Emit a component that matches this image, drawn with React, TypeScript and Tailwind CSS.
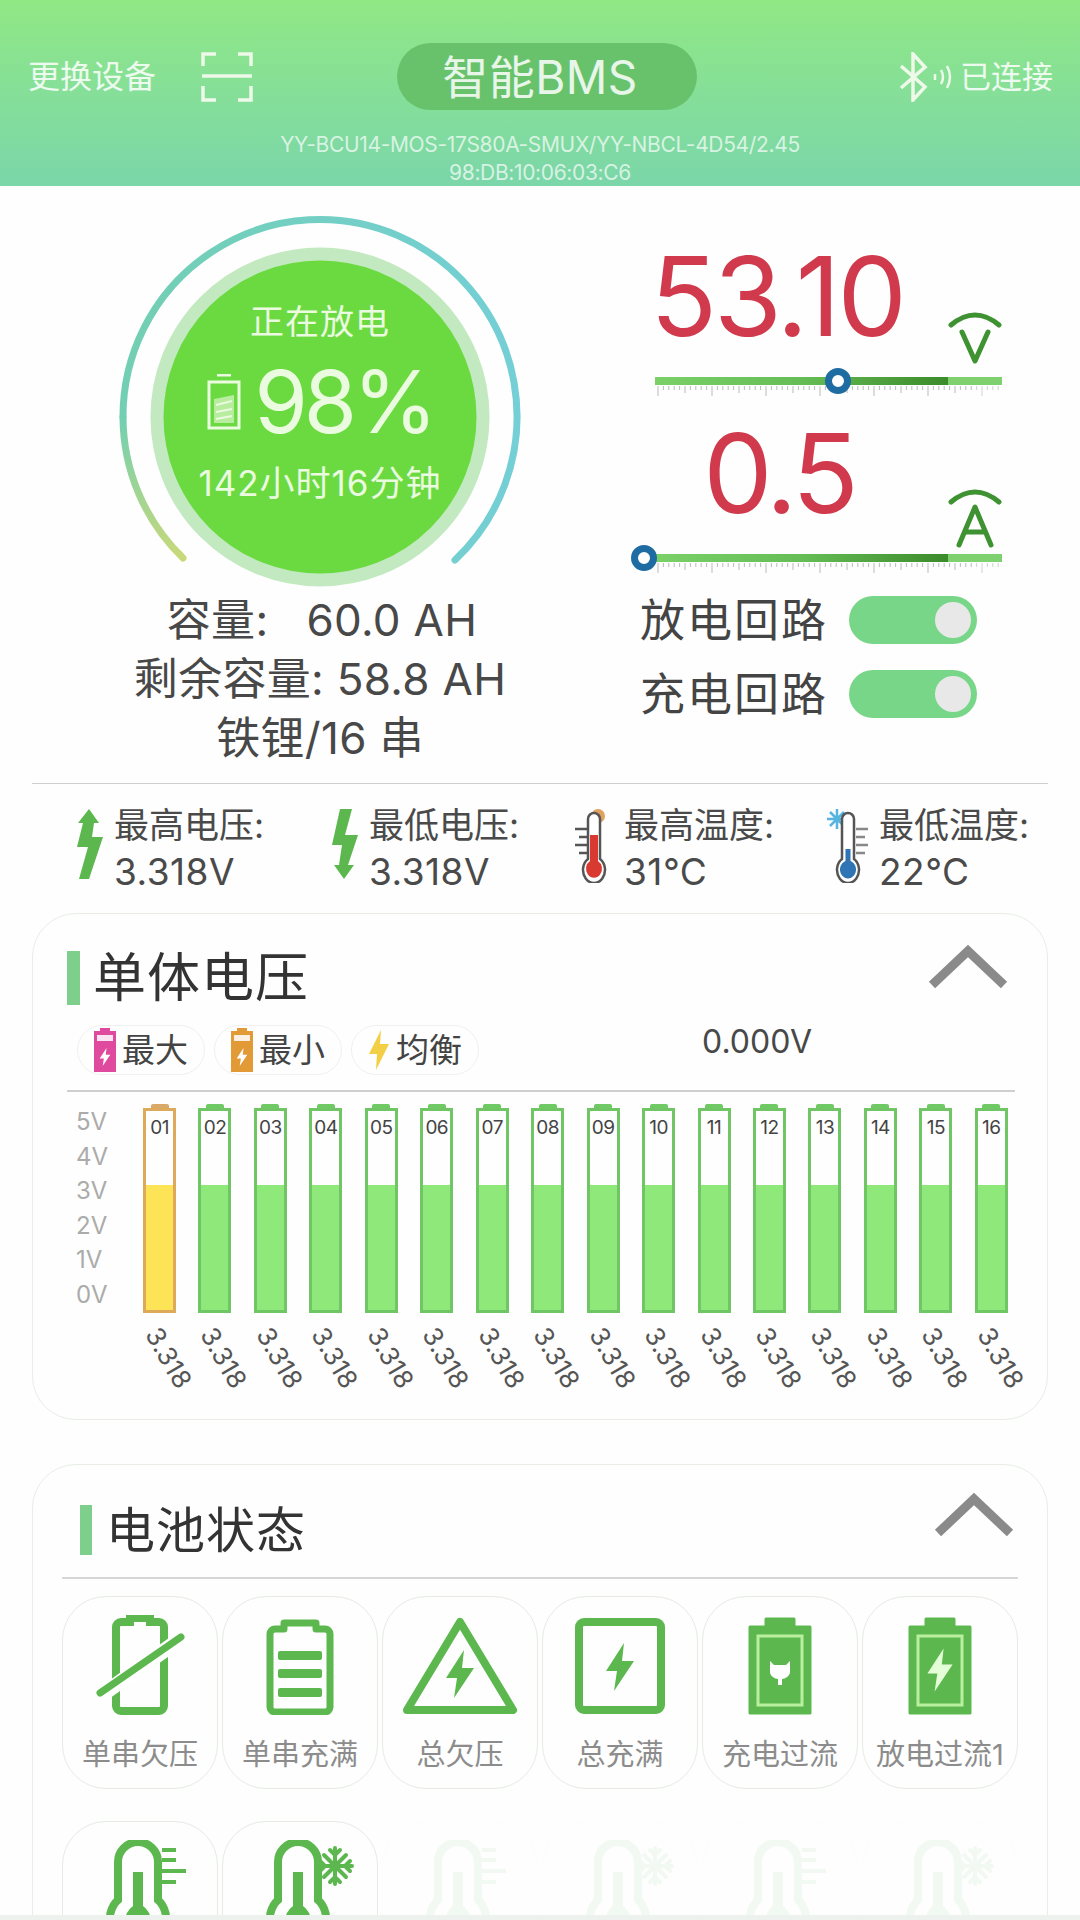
const bars = ["01","02","03","04","05","06","07","08","09","10","11","12","13","14","15","16"];
const axis = ["5V","4V","3V","2V","1V","0V"];
const G = "#5cb84e";

const Bolt = ({ x, y, s = 1, fill = G }: { x: number; y: number; s?: number; fill?: string }) => (
  <path transform={`translate(${x} ${y}) scale(${s})`} d="M4-24-14 4H-3L-6 24 14-6H2Z" fill={fill} />
);

const Ticks = () => (
  <svg width="347" height="12" viewBox="0 0 347 12" className="block">
    {Array.from({ length: 64 }).map((_, i) => (
      <line key={i} x1={3 + i * 5.4} x2={3 + i * 5.4} y1="1" y2={i % 10 === 0 ? 11 : i % 5 === 0 ? 8 : 5} stroke="#9aa39a" strokeWidth="1" opacity={i > 58 ? 0.45 : 0.7} />
    ))}
  </svg>
);

const Slider = ({ pos }: { pos: number }) => (
  <div className="relative ml-[15px] h-[44px] w-[347px] pt-[18px]">
    <div className="flex h-[8px]">
      <div className="w-[293px] bg-gradient-to-r from-[#7bd068] via-[#66bd55] to-[#3b8a2b]" />
      <div className="flex-1 bg-[#7fd06f]" />
    </div>
    <Ticks />
    <div className="absolute top-[9px] h-[26px] w-[26px] rounded-full border-[7px] border-[#1f6ca3] bg-white" style={{ left: pos - 13 }} />
  </div>
);

const UnitIcon = ({ label }: { label: string }) => (
  <svg width="60" height="64" viewBox="0 0 60 64" className="mb-[-13px]">
    <path d="M5 17Q29-3 53 17" fill="none" stroke="#3f9232" strokeWidth="5" strokeLinecap="round" />
    {label === "V" ? (
      <path d="M16 24 29 53 42 24" fill="none" stroke="#3f9232" strokeWidth="5" strokeLinecap="round" strokeLinejoin="round" />
    ) : (
      <path d="M13 60 29 22 45 60M19 47H39" fill="none" stroke="#3f9232" strokeWidth="5" strokeLinecap="round" strokeLinejoin="round" />
    )}
  </svg>
);

const Toggle = ({ label }: { label: string }) => (
  <div className="flex h-[74px] items-center">
    <span className="w-[209px] text-[45px] leading-none tracking-[2px] text-[#444]">{label}</span>
    <div className="flex h-[48px] w-[128px] items-center justify-end rounded-full bg-[#78d688] pr-[6px]">
      <div className="h-[36px] w-[36px] rounded-full bg-[#e8e8e8]" />
    </div>
  </div>
);

const Stat = ({ icon, label, value }: { icon: React.ReactNode; label: string; value: string }) => (
  <div className="flex w-[255px] shrink-0">
    <div className="flex w-[48px] justify-center pt-[3px]">{icon}</div>
    <div className="flex flex-col gap-[9px] leading-[38px] text-[#4a4a4a]">
      <span className="text-[35px]">{label}</span>
      <span className="text-[37px] tracking-[0.5px]">{value}</span>
    </div>
  </div>
);

const Thermo = ({ hot }: { hot: boolean }) => {
  const c = hot ? "#d83a32" : "#2f74b5";
  return (
    <svg width="56" height="74" viewBox="0 0 56 74" className={hot ? "ml-[-20px] shrink-0" : "ml-[-15px] shrink-0"}>
      {hot ? (
        <>
          <circle cx="36" cy="7" r="7" fill="#e0a060" />
          <path d="M13 20H26M17 28H26M13 36H26M17 44H26" stroke="#555" strokeWidth="2.500" />
        </>
      ) : (
        <>
          <path d="M17 0V20M7 10H27M10 3 24 17M24 3 10 17" stroke="#55b5e0" strokeWidth="2.500" />
          <path d="M36 20H48M36 28H45M36 36H48M36 44H45" stroke="#888" strokeWidth="2.500" />
        </>
      )}
      <path d={hot ? "M26 10V50A11 13 0 1 0 38 50V10A6 6 0 0 0 26 10Z" : "M22 10V50A11 13 0 1 0 34 50V10A6 6 0 0 0 22 10Z"} fill="#fff" stroke="#555" strokeWidth="2.500" />
      <path d={hot ? "M28 26H36V52A8 9 0 1 1 28 52Z" : "M25.500 40H30.500V52A8 9 0 1 1 25.500 52Z"} fill={c} />
    </svg>
  );
};

const LegendBattery = ({ color }: { color: string }) => (
  <svg width="22" height="44" viewBox="0 0 22 44">
    <path d="M6 0H16V3H22V44H0V3H6Z" fill={color} />
    <rect x="3" y="7" width="16" height="6" fill="#fff" opacity=".85" />
    <Bolt x={11} y={29} s={0.38} fill="#ffffff" />
  </svg>
);

const Pill = ({ icon, label }: { icon: React.ReactNode; label: string }) => (
  <div className="flex h-[50px] w-[128px] items-center justify-center gap-[6px] rounded-full border border-[#f0f0f0] text-[33px] leading-none text-[#444]">
    {icon}
    <span>{label}</span>
  </div>
);

const Chevron = () => (
  <svg width="84" height="48" viewBox="0 0 84 48">
    <path d="M6 42 42 8 78 42" fill="none" stroke="#8a8a8a" strokeWidth="9" />
  </svg>
);

const SectionTitle = ({ label, size }: { label: string; size: string }) => (
  <span className={`${size} leading-none tracking-[1px] text-[#333]`}>{label}</span>
);

const ThermoIcon = ({ cold }: { cold?: boolean }) => (
  <svg width="120" height="130" viewBox="0 0 120 130">
    <path d="M38 60V22A20 20 0 0 1 78 22V60C92 72 90 106 58 110 26 106 24 72 38 60Z" fill="none" stroke={G} strokeWidth="8" />
    <path d="M53 32H63V66C74 74 78 98 58 98 38 98 42 74 53 66Z" fill={G} />
    {cold ? (
      <g stroke={G} strokeWidth="4" strokeLinecap="round">
        <path d="M95 8V44M78 26H112M84 15 106 37M106 15 84 37" />
        <path d="M90 10 95 15 100 10M90 42 95 37 100 42M80 21 85 26 80 31M110 21 105 26 110 31" fill="none" />
      </g>
    ) : (
      <path d="M82 10H96M82 20H96M82 31H106M82 42H96" stroke={G} strokeWidth="4" />
    )}
  </svg>
);

const icons: React.ReactNode[] = [
  <svg key="a" width="120" height="100" viewBox="0 0 120 100">
    <path d="M50 3H70V7H79A5 5 0 0 1 84 12V91A5 5 0 0 1 79 96H41A5 5 0 0 1 36 91V12A5 5 0 0 1 41 7H50Z" fill="none" stroke={G} strokeWidth="8" />
    <path d="M16 84 106 20" stroke="#fff" strokeWidth="15" />
    <path d="M20 78 101 22" stroke={G} strokeWidth="7" strokeLinecap="round" />
  </svg>,
  <svg key="b" width="120" height="100" viewBox="0 0 120 100">
    <path d="M44 8H76V14H85A5 5 0 0 1 90 19V92A5 5 0 0 1 85 97H35A5 5 0 0 1 30 92V19A5 5 0 0 1 35 14H44Z" fill="none" stroke={G} strokeWidth="7" strokeLinejoin="round" />
    <rect x="38" y="36" width="44" height="9" rx="2" fill={G} />
    <rect x="38" y="54" width="44" height="9" rx="2" fill={G} />
    <rect x="38" y="73" width="44" height="9" rx="2" fill={G} />
  </svg>,
  <svg key="c" width="120" height="100" viewBox="0 0 120 100">
    <path d="M60 7 113 95H7Z" fill="none" stroke={G} strokeWidth="8" strokeLinejoin="round" />
    <Bolt x={60} y={59} s={1} />
  </svg>,
  <svg key="d" width="120" height="100" viewBox="0 0 120 100">
    <rect x="19" y="7" width="82" height="88" rx="5" fill="none" stroke={G} strokeWidth="8" />
    <Bolt x={60} y={52} s={1} />
  </svg>,
  <svg key="e" width="120" height="100" viewBox="0 0 120 100">
    <path d="M46 4H74V12H90V98H30V12H46Z" fill={G} stroke={G} strokeWidth="3" strokeLinejoin="round" />
    <rect x="38" y="21" width="44" height="69" fill="none" stroke="#b9ef9f" strokeWidth="3" />
    <path d="M50 46 54 50H66L70 46V57C70 61 65 64 62 64V70H58V64C55 64 50 61 50 57Z" fill="#ffffff" />
  </svg>,
  <svg key="f" width="120" height="100" viewBox="0 0 120 100">
    <path d="M46 4H74V12H90V98H30V12H46Z" fill={G} stroke={G} strokeWidth="3" strokeLinejoin="round" />
    <rect x="38" y="21" width="44" height="69" fill="none" stroke="#b9ef9f" strokeWidth="3" />
    <Bolt x={60} y={55} s={0.9} fill="#e4ffd8" />
  </svg>,
];
const names = ["单串欠压", "单串充满", "总欠压", "总充满", "充电过流", "放电过流1"];

export default function App() {
  return (
    <div className="flex h-[1920px] w-[1080px] flex-col overflow-hidden bg-[#fdfefd] [font-family:Inter,'Noto_Sans_CJK_SC',sans-serif]">
      {/* header */}
      <div className="h-[186px] shrink-0 bg-gradient-to-b from-[#90e884] to-[#7bd6a9] pt-[43px] text-white/85">
        <div className="grid h-[67px] grid-cols-[397px_300px_1fr] items-center">
          <div className="flex items-center pl-[28px]">
            <span className="text-[32px] leading-none">更换设备</span>
            <svg width="54" height="50" viewBox="0 0 54 50" className="ml-[44px]">
              <path d="M16 2H3V14M38 2H51V14M16 48H3V34M38 48H51V34M2 24H52" fill="none" stroke="#eef9ea" strokeWidth="3.500" />
            </svg>
          </div>
          <div className="flex h-[67px] items-center justify-center rounded-full bg-[#68c26c] pr-[14px] text-[46px] leading-none tracking-[0.5px]">智能BMS</div>
          <div className="flex items-center justify-end pr-[27px]">
            <svg width="60" height="50" viewBox="0 0 60 50" className="mr-[2px]">
              <path d="M3 14 27 35 15 48V2L27 15 3 36" fill="none" stroke="#eef9ea" strokeWidth="3.500" />
              <path d="M37 22V28M43 18Q47 25 43 32M49 14Q55 25 49 36" fill="none" stroke="#eef9ea" strokeWidth="2.500" />
            </svg>
            <span className="text-[31px] leading-none">已连接</span>
          </div>
        </div>
        <div className="mt-[21px] flex flex-col items-center text-[21px] leading-[28px] tracking-[-0.35px] text-white/70">
          <span>YY-BCU14-MOS-17S80A-SMUX/YY-NBCL-4D54/2.45</span>
          <span>98:DB:10:06:03:C6</span>
        </div>
      </div>

      <div className="min-h-0 flex-1 overflow-hidden">
        {/* gauge + readings */}
        <div className="flex h-[597px]">
          <div className="flex w-[640px] shrink-0 flex-col items-center pt-[28px]">
            <div className="relative h-[376px] w-[410px]">
              <svg width="410" height="376" viewBox="0 0 410 376" className="block">
                <defs>
                  <linearGradient id="arcA" x1="0" y1="1" x2="0" y2="0">
                    <stop offset="0" stopColor="#c8d97a" />
                    <stop offset="1" stopColor="#72cfb2" />
                  </linearGradient>
                  <linearGradient id="arcB" x1="0" y1="0" x2="1" y2="0">
                    <stop offset="0" stopColor="#72cfb2" />
                    <stop offset="1" stopColor="#74cfd6" />
                  </linearGradient>
                </defs>
                <path d="M68 344A197 197 0 0 1 8 203" fill="none" stroke="url(#arcA)" strokeWidth="7" strokeLinecap="round" />
                <path d="M8 203A197 197 0 1 1 340 346" fill="none" stroke="url(#arcB)" strokeWidth="7" strokeLinecap="round" />
                <circle cx="205" cy="203" r="163" fill="#6bda40" stroke="#c2e9bf" strokeWidth="13" />
              </svg>
              <div className="absolute inset-0 flex flex-col items-center text-[#eafbe0]">
                <span className="mt-[91px] text-[34px] leading-none tracking-[1px]">正在放电</span>
                <div className="mt-[24px] flex h-[78px] items-center">
                  <svg width="34" height="56" viewBox="0 0 34 56" className="mr-[14px]">
                    <path d="M10 1H24" stroke="#eafbe0" strokeWidth="3" />
                    <rect x="2" y="8" width="30" height="46" fill="none" stroke="#eafbe0" strokeWidth="3" />
                    <path d="M7 25 27 21V49H7Z" fill="#b8ec9e" />
                    <path d="M9 31 25 27M9 38 25 35M9 45 25 42" stroke="#eafbe0" strokeWidth="2" />
                  </svg>
                  <span className="text-[86px] leading-none tracking-[-4px]">98%</span>
                </div>
                <span className="mt-[25px] text-[35px] leading-none tracking-[1px]">142小时16分钟</span>
              </div>
            </div>
            <div className="mt-[1px] flex flex-col items-center text-[44px] leading-[59px] tracking-[0.3px] text-[#484848]">
              <span className="pl-[4px]">容量:&nbsp;&nbsp;&nbsp;60.0 AH</span>
              <span>剩余容量: 58.8 AH</span>
              <span>铁锂/16 串</span>
            </div>
          </div>

          <div className="flex-1 pt-[48px]">
            <div className="flex h-[125px] items-end">
              <span className="h-[125px] w-[274px] text-center text-[110px] leading-[125px] tracking-[-3px] text-[#d13a4d]">53.10</span>
              <div className="ml-[32px]"><UnitIcon label="V" /></div>
            </div>
            <Slider pos={183} />
            <div className="mt-[8px] flex h-[125px] items-end">
              <span className="h-[125px] w-[278px] text-center text-[110px] leading-[125px] tracking-[-4px] text-[#d13a4d]">0.5</span>
              <div className="ml-[28px]"><UnitIcon label="A" /></div>
            </div>
            <Slider pos={-11} />
            <div className="pt-[3px]">
              <Toggle label="放电回路" />
              <Toggle label="充电回路" />
            </div>
          </div>
        </div>

        <div className="mx-[32px] h-px bg-[#cfcfcf]" />

        {/* min / max */}
        <div className="flex h-[129px] pl-[66px] pt-[22px]">
          <Stat
            label="最高电压:"
            value="3.318V"
            icon={
              <svg width="30" height="72" viewBox="0 0 30 72">
                <path d="M14 0 24 14H19L17 28 28 28 14 70H4L13 38 2 38 8 14H3Z" fill="#5cb84e" />
              </svg>
            }
          />
          <Stat
            label="最低电压:"
            value="3.318V"
            icon={
              <svg width="30" height="72" viewBox="0 0 30 72">
                <path d="M10 0H22L15 26H28L18 56H24L14 70 4 56H9L12 36H2Z" fill="#5cb84e" />
              </svg>
            }
          />
          <Stat label="最高温度:" value="31°C" icon={<Thermo hot />} />
          <Stat label="最低温度:" value="22°C" icon={<Thermo hot={false} />} />
        </div>

        {/* cell voltages */}
        <div className="mx-[32px] h-[507px] rounded-[44px] border border-[#e8eee6] px-[34px] pt-[37px]">
          <div className="flex h-[54px] items-center">
            <div className="mr-[13px] h-[54px] w-[13px] bg-[#7fcf8c]" />
            <SectionTitle label="单体电压" size="text-[53px]" />
            <div className="ml-auto mr-[3px] mt-[-22px]"><Chevron /></div>
          </div>
          <div className="mt-[20px] flex h-[50px] items-center gap-[9px] pl-[10px]">
            <Pill label="最大" icon={<LegendBattery color="#df4a9f" />} />
            <Pill label="最小" icon={<LegendBattery color="#e29a37" />} />
            <Pill
              label="均衡"
              icon={
                <svg width="22" height="40" viewBox="0 0 22 40">
                  <path d="M13 0 1 24H9L8 40 21 14H12Z" fill="#f2cf45" />
                </svg>
              }
            />
            <span className="ml-[214px] mt-[-16px] text-[32px] leading-none text-[#484848]">0.000V</span>
          </div>
          <div className="mt-[15px] h-[2px] w-[948px] bg-[#cfcfcf]" />
          <div className="flex pt-[12px]">
            <div className="flex h-[206px] w-[76px] shrink-0 flex-col justify-between pl-[9px] pt-[3px] text-[24px] leading-[30px] text-[#ababab]">
              {axis.map((a) => (
                <span key={a}>{a}</span>
              ))}
            </div>
            <div className="flex w-[865px] justify-between">
              {bars.map((b, i) => {
                const first = i === 0;
                return (
                  <div key={b} className="flex w-[33px] flex-col items-center">
                    <div className={first ? "h-[4px] w-[18px] rounded-t-[2px] bg-[#d9a96a]" : "h-[4px] w-[18px] rounded-t-[2px] bg-[#6fc964]"} />
                    <div className={first ? "flex h-[205px] w-[33px] flex-col justify-between border-[3px] border-[#dda95b]" : "flex h-[205px] w-[33px] flex-col justify-between border-[3px] border-[#70c565]"}>
                      <span className="pt-[7px] text-center text-[19px] leading-none tracking-[-0.5px] text-[#444]">{b}</span>
                      <div className={first ? "h-[125px] bg-[#fde456]" : "h-[125px] bg-[#8fe97a]"} />
                    </div>
                    <div className="flex h-[90px] w-[33px] items-center justify-center">
                      <span className="translate-x-[9px] rotate-60 whitespace-nowrap text-[26px] leading-none text-[#555]">3.318</span>
                    </div>
                  </div>
                );
              })}
            </div>
          </div>
        </div>

        {/* battery status */}
        <div className="mx-[32px] mt-[44px] h-[520px] rounded-[44px] border border-[#e8eee6] px-[29px] pt-[40px]">
          <div className="flex h-[50px] items-center pl-[18px]">
            <div className="mr-[14px] h-[50px] w-[12px] bg-[#7fcf8c]" />
            <SectionTitle label="电池状态" size="text-[49px]" />
            <div className="ml-auto mr-[2px] mt-[-30px]"><Chevron /></div>
          </div>
          <div className="mt-[22px] h-[2px] bg-[#d6d6d6]" />
          <div className="mt-[17px] grid grid-cols-[repeat(6,156px)] gap-x-[4px] gap-y-[32px]">
            {names.map((n, i) => (
              <div key={n} className="flex h-[193px] flex-col items-center rounded-[44px] border border-[#e6ebe4] pt-[18px]">
                <div className="h-[100px]">{icons[i]}</div>
                <span className="mt-[25px] whitespace-nowrap text-[29px] leading-none text-[#8c8c8c]">{n}</span>
              </div>
            ))}
            <div className="flex h-[193px] flex-col items-center rounded-[44px] border border-[#e6ebe4] pt-[18px]"><ThermoIcon /></div>
            <div className="flex h-[193px] flex-col items-center rounded-[44px] border border-[#e6ebe4] pt-[18px]"><ThermoIcon cold /></div>
            {[0, 1, 2, 3].map((k) => (
              <div key={k} className="flex h-[193px] flex-col items-center rounded-[44px] border border-[#f8faf7] pt-[18px] opacity-[0.06]">
                <ThermoIcon cold={k % 2 === 1} />
              </div>
            ))}
          </div>
        </div>
      </div>
      <div className="h-[5px] shrink-0 bg-[#eef2ef]" />
    </div>
  );
}
